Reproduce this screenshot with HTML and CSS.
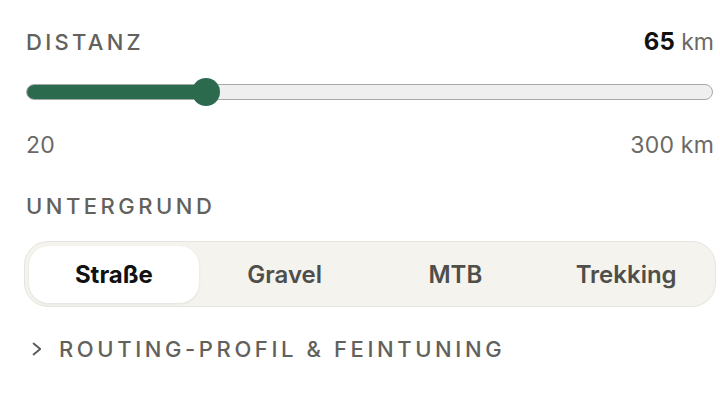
FILE: index.html
```html
<!DOCTYPE html>
<html lang="de">
<head>
<meta charset="utf-8">
<link rel="stylesheet" href="styles.css">
</head>
<body>
<div class="panel">
  <div class="row head">
    <span class="label">Distanz</span>
    <span class="value"><b>65</b> km</span>
  </div>
  <div class="slider">
    <div class="track">
      <div class="fill" style="width: 180px"></div>
    </div>
    <div class="thumb" style="left: 166px"></div>
  </div>
  <div class="row range">
    <span>20</span>
    <span>300 km</span>
  </div>
  <div class="label sub">Untergrund</div>
  <div class="seg">
    <div class="opt active">Straße</div>
    <div class="opt">Gravel</div>
    <div class="opt">MTB</div>
    <div class="opt">Trekking</div>
  </div>
  <div class="more">
    <svg class="chev" width="10" height="14" viewBox="0 0 10 14"><path d="M1.6 1.5 L8.2 7 L1.6 12.5" fill="none" stroke="#5a5955" stroke-width="1.9" stroke-linecap="round" stroke-linejoin="round"/></svg>
    <span class="label">Routing-Profil &amp; Feintuning</span>
  </div>
</div>
</body>
</html>
```

FILE: styles.css
```css
html, body {
  margin: 0;
  padding: 0;
  background: #ffffff;
}
body {
  font-family: Inter, "Noto Sans", sans-serif;
  color: #62615c;
}
.panel {
  padding: 28px 6px 0 26px;
}
.row {
  display: flex;
  justify-content: space-between;
  align-items: baseline;
}
.head {
  line-height: 28px;
}
.label {
  font-size: 22px;
  line-height: 28px;
  font-weight: 500;
  letter-spacing: 3.5px;
  text-transform: uppercase;
  color: #62615c;
}
.head .label {
  letter-spacing: 3.3px;
}
.value {
  font-size: 23px;
  color: #6a6965;
}
.value b {
  font-weight: 700;
  font-size: 24px;
  color: #111111;
}
.slider {
  position: relative;
  height: 30px;
  margin-top: 21px;
}
.track {
  position: absolute;
  left: 0;
  right: 1px;
  top: 7px;
  height: 16px;
  box-sizing: border-box;
  border: 1.5px solid #a9a9a9;
  border-radius: 8px;
  background: #efefef;
  overflow: hidden;
}
.fill {
  height: 100%;
  background: #2b6a4d;
  margin: -1.5px 0 0 -1.5px;
  padding: 1.5px;
  border-radius: 8px 0 0 8px;
}
.thumb {
  position: absolute;
  top: 1px;
  width: 28px;
  height: 28px;
  border-radius: 50%;
  background: #2b6a4d;
}
.range {
  margin-top: 24px;
  font-size: 23px;
  line-height: 28px;
  letter-spacing: 0.2px;
  color: #6a6965;
}
.sub {
  margin-top: 33px;
}
.seg {
  display: grid;
  grid-template-columns: repeat(4, 1fr);
  margin: 21px -2px 0 -2px;
  padding: 3.5px;
  height: 66px;
  box-sizing: border-box;
  background: #f4f3ee;
  border: 1.5px solid #e6e4de;
  border-radius: 24px;
}
.opt {
  display: flex;
  align-items: center;
  justify-content: center;
  font-size: 24px;
  font-weight: 600;
  color: #4f4e4a;
  border-radius: 20px;
}
.opt.active {
  background: #ffffff;
  color: #111111;
  font-weight: 700;
  box-shadow: 0 1px 3px rgba(0, 0, 0, 0.08);
}
.more {
  display: flex;
  align-items: center;
  gap: 17px;
  margin-top: 28px;
  padding-left: 6px;
}
.more .label {
  letter-spacing: 3.6px;
}
```
